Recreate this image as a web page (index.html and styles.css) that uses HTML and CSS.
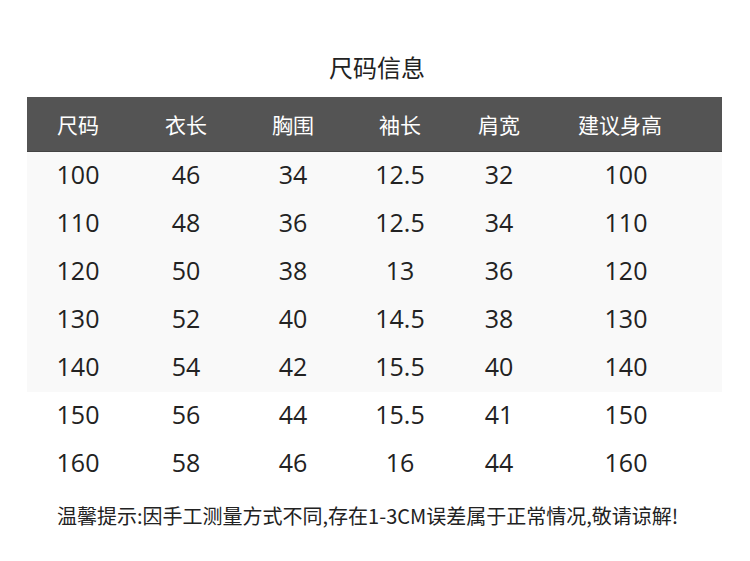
FILE: index.html
```html
<!DOCTYPE html>
<html lang="zh">
<head>
<meta charset="utf-8">
<link rel="stylesheet" href="styles.css">
</head>
<body>
<div class="page">
  <h1 class="title">尺码信息</h1>
  <div class="table">
    <div class="head">
      <div class="grid">
        <span>尺码</span><span>衣长</span><span>胸围</span><span>袖长</span><span>肩宽</span><span class="last">建议身高</span>
      </div>
    </div>
    <div class="body">
      <div class="grid row shade"><span>100</span><span>46</span><span>34</span><span>12.5</span><span>32</span><span>100</span></div>
      <div class="grid row shade"><span>110</span><span>48</span><span>36</span><span>12.5</span><span>34</span><span>110</span></div>
      <div class="grid row shade"><span>120</span><span>50</span><span>38</span><span>13</span><span>36</span><span>120</span></div>
      <div class="grid row shade"><span>130</span><span>52</span><span>40</span><span>14.5</span><span>38</span><span>130</span></div>
      <div class="grid row shade"><span>140</span><span>54</span><span>42</span><span>15.5</span><span>40</span><span>140</span></div>
      <div class="grid row"><span>150</span><span>56</span><span>44</span><span>15.5</span><span>41</span><span>150</span></div>
      <div class="grid row"><span>160</span><span>58</span><span>46</span><span>16</span><span>44</span><span>160</span></div>
    </div>
  </div>
  <p class="note">温馨提示:因手工测量方式不同,存在1-3CM误差属于正常情况,敬请谅解!</p>
</div>
</body>
</html>
```
FILE: styles.css
```css
html, body {
  margin: 0;
  padding: 0;
  background: #fff;
}
.page {
  width: 750px;
  height: 561px;
  overflow: hidden;
}
.title {
  margin: 0;
  height: 97px;
  box-sizing: border-box;
  padding-top: 50px;
  line-height: 34px;
  text-align: center;
  font-family: "Noto Sans CJK SC", sans-serif;
  font-weight: 400;
  font-size: 24px;
  color: #222;
  padding-left: 4px;
}
.table {
  margin-left: 27px;
  width: 695px;
}
.head {
  height: 55px;
  background: #545454;
  border-bottom: 1px solid #444;
  box-sizing: border-box;
}
.grid {
  display: grid;
  grid-template-columns: 102px 114px 100px 114px 84px 170px;
  align-items: center;
  text-align: center;
}
.head .grid {
  height: 54px;
  font-family: "Noto Sans CJK SC", sans-serif;
  font-size: 21px;
  color: #fff;
}
.head .last {
  padding-right: 12px;
}
.row {
  height: 48px;
  box-sizing: border-box;
  padding-bottom: 4px;
  font-family: "Open Sans", sans-serif;
  font-size: 25px;
  color: #222;
}
.shade {
  background: #f9f9f9;
}
.note {
  margin: 13px 0 0 57px;
  font-family: "Noto Sans CJK SC", sans-serif;
  font-size: 20px;
  line-height: 30px;
  color: #222;
  white-space: nowrap;
}
```
